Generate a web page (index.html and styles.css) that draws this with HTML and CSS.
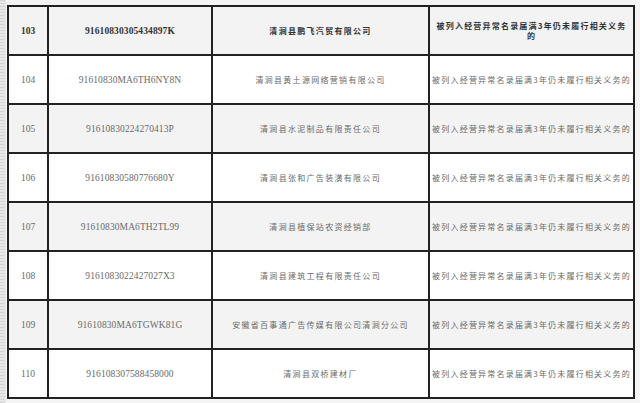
FILE: index.html
```html
<!DOCTYPE html>
<html lang="zh-CN">
<head>
<meta charset="utf-8">
<title>经营异常名录</title>
<link rel="stylesheet" href="styles.css">
</head>
<body>
<div class="page">
  <table class="list">
    <tr class="head">
      <td class="c1">103</td>
      <td class="c2">91610830305434897K</td>
      <td class="c3">清涧县鹏飞汽贸有限公司</td>
      <td class="c4 wrap">被列入经营异常名录届满3年仍未履行相关义务<br>的</td>
    </tr>
    <tr>
      <td class="c1">104</td>
      <td class="c2">91610830MA6TH6NY8N</td>
      <td class="c3">清涧县黄土源网络营销有限公司</td>
      <td class="c4">被列入经营异常名录届满3年仍未履行相关义务的</td>
    </tr>
    <tr class="alt">
      <td class="c1">105</td>
      <td class="c2">91610830224270413P</td>
      <td class="c3">清涧县水泥制品有限责任公司</td>
      <td class="c4">被列入经营异常名录届满3年仍未履行相关义务的</td>
    </tr>
    <tr>
      <td class="c1">106</td>
      <td class="c2">91610830580776680Y</td>
      <td class="c3">清涧县张和广告装潢有限公司</td>
      <td class="c4">被列入经营异常名录届满3年仍未履行相关义务的</td>
    </tr>
    <tr class="alt">
      <td class="c1">107</td>
      <td class="c2">91610830MA6TH2TL99</td>
      <td class="c3">清涧县植保站农资经销部</td>
      <td class="c4">被列入经营异常名录届满3年仍未履行相关义务的</td>
    </tr>
    <tr>
      <td class="c1">108</td>
      <td class="c2">9161083022427027X3</td>
      <td class="c3">清涧县建筑工程有限责任公司</td>
      <td class="c4">被列入经营异常名录届满3年仍未履行相关义务的</td>
    </tr>
    <tr class="alt">
      <td class="c1">109</td>
      <td class="c2">91610830MA6TGWK81G</td>
      <td class="c3">安徽省百事通广告传媒有限公司清涧分公司</td>
      <td class="c4">被列入经营异常名录届满3年仍未履行相关义务的</td>
    </tr>
    <tr>
      <td class="c1">110</td>
      <td class="c2">916108307588458000</td>
      <td class="c3">清涧县双桥建材厂</td>
      <td class="c4">被列入经营异常名录届满3年仍未履行相关义务的</td>
    </tr>
  </table>
</div>
</body>
</html>
```
FILE: styles.css
```css
html, body {
  margin: 0;
  padding: 0;
}
body {
  width: 640px;
  height: 403px;
  overflow: hidden;
  background:
    repeating-linear-gradient(to bottom, #d6d6d6 0 1px, transparent 1px 3px) left top / 5px 100% no-repeat,
    linear-gradient(to right, #e6e6e6 0 6px, #f4f4f4 6px);
}
.page {
  padding: 5px 0 0 7px;
}
.list {
  width: 628px;
  table-layout: fixed;
  border-collapse: separate;
  border-spacing: 0;
  border-top: 2px solid #222;
  border-left: 2px solid #222;
  background: #fff;
}
.list tr {
  height: 49px;
}
.list tr.head,
.list tr.alt {
  background: #f3f3f3;
}
.list td {
  box-sizing: border-box;
  border-right: 2px solid #222;
  border-bottom: 2px solid #222;
  padding: 0;
  text-align: center;
  vertical-align: middle;
  white-space: nowrap;
  overflow: hidden;
  color: #6a6a6a;
}
.c1 {
  width: 40px;
  font-family: "Liberation Serif", serif;
  font-size: 9.5px;
}
.c2 {
  width: 164px;
  font-family: "Liberation Serif", serif;
  font-size: 9.5px;
  letter-spacing: 0.1px;
}
.c3 {
  width: 217px;
  font-family: "Noto Sans CJK SC", sans-serif;
  font-size: 8px;
  letter-spacing: 1.3px;
}
.c4 {
  width: 205px;
  font-family: "Noto Sans CJK SC", sans-serif;
  font-size: 8px;
  letter-spacing: 1.2px;
}
.c4.wrap {
  white-space: normal;
  line-height: 10px;
}
.head td {
  font-weight: bold;
  color: #333;
}
```
